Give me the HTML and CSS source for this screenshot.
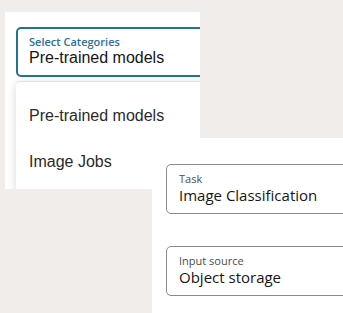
FILE: index.html
```html
<!DOCTYPE html>
<html lang="en">
<head>
    <meta charset="UTF-8">
    <meta name="viewport" content="width=device-width, initial-scale=1.0">
    <title>Vision - Categories</title>
    <link rel="stylesheet" href="styles.css">
</head>
<body>
    <div class="canvas">
        <!-- Category picker, opened -->
        <div class="panel panel-categories">
            <div class="field field-active">
                <span class="field-label">Select Categories</span>
                <span class="field-value">Pre-trained models</span>
            </div>
            <div class="dropdown">
                <div class="dropdown-item">Pre-trained models</div>
                <div class="dropdown-item">Image Jobs</div>
            </div>
        </div>

        <!-- Task settings -->
        <div class="panel panel-task">
            <div class="field">
                <span class="field-label">Task</span>
                <span class="field-value">Image Classification</span>
            </div>
            <div class="field">
                <span class="field-label">Input source</span>
                <span class="field-value">Object storage</span>
            </div>
        </div>
    </div>
</body>
</html>
```

FILE: styles.css
```css
* {
    margin: 0;
    padding: 0;
    box-sizing: border-box;
}

body {
    background: #f1edea;
    height: 313px;
    overflow: hidden;
    color: #161513;
}

.canvas {
    display: grid;
    grid-template-columns: 147px 48px 1fr;
    grid-template-rows: 126px 51px 1fr;
    height: 313px;
    padding: 12px 0 0 5px;
}

.panel {
    background: #ffffff;
    overflow: hidden;
}

.panel-categories {
    grid-column: 1 / 3;
    grid-row: 1 / 3;
    padding: 15px 0 0 11px;
    font-family: 'Liberation Sans', Arial, sans-serif;
}

.panel-task {
    grid-column: 2 / 4;
    grid-row: 2 / 4;
    z-index: 1;
    padding: 26px 0 0 14px;
    font-family: 'Open Sans', sans-serif;
}

.field {
    display: flex;
    flex-direction: column;
    width: 200px;
    height: 50px;
    border: 1px solid #8d8b88;
    border-radius: 5px;
    padding: 7px 12px;
    margin-bottom: 32px;
}

.field-label {
    font-family: 'Open Sans', sans-serif;
    font-size: 11px;
    line-height: 14px;
    color: #4f4d4a;
}

.field-value {
    font-size: 15px;
    line-height: 18px;
    white-space: nowrap;
}

.field-active {
    width: 230px;
    border: 2px solid #22729a;
    padding: 6px 11px;
    margin-bottom: 4px;
}

.field-active .field-label {
    font-weight: 600;
    color: #2a7196;
}

.field-active .field-value {
    font-size: 16px;
}

.dropdown {
    width: 230px;
    height: 140px;
    padding-top: 11px;
    background: #ffffff;
    border-top: 1px solid #e4e2df;
    border-radius: 4px;
    box-shadow: 0 2px 10px rgba(0,0,0,0.16);
}

.dropdown-item {
    height: 46px;
    line-height: 46px;
    padding-left: 13px;
    font-size: 16px;
    color: #2b2a28;
}
```
